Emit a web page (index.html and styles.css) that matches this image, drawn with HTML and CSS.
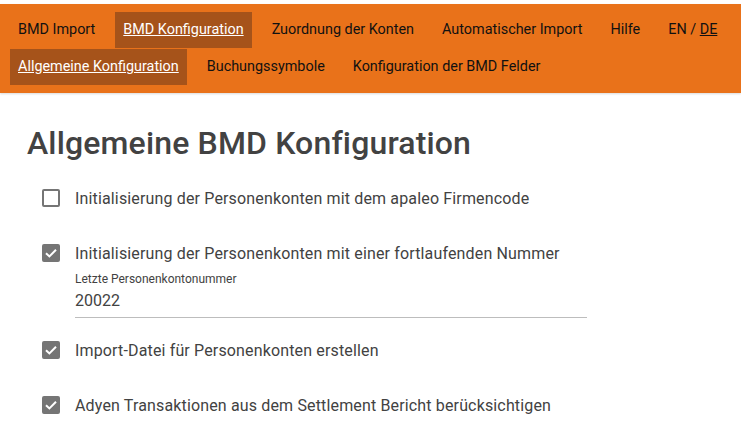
FILE: index.html
```html
<!DOCTYPE html>
<html lang="de">
<head>
  <meta charset="UTF-8">
  <meta name="viewport" content="width=device-width, initial-scale=1.0">
  <title>BMD Konfiguration</title>
  <link rel="stylesheet" href="styles.css">
</head>
<body>

  <header class="topbar">
    <nav class="nav-row">
      <a class="nav-item" href="#">BMD Import</a>
      <a class="nav-item active" href="#">BMD Konfiguration</a>
      <a class="nav-item" href="#">Zuordnung der Konten</a>
      <a class="nav-item" href="#">Automatischer Import</a>
      <a class="nav-item" href="#">Hilfe</a>
      <span class="nav-item lang">EN / <u>DE</u></span>
    </nav>
    <nav class="nav-row">
      <a class="nav-item active" href="#">Allgemeine Konfiguration</a>
      <a class="nav-item" href="#">Buchungssymbole</a>
      <a class="nav-item" href="#">Konfiguration der BMD Felder</a>
    </nav>
  </header>

  <main class="content">
    <h1>Allgemeine BMD Konfiguration</h1>

    <label class="option option-first">
      <span class="checkbox"></span>
      <span class="option-text">Initialisierung der Personenkonten mit dem apaleo Firmencode</span>
    </label>

    <label class="option">
      <span class="checkbox checked">
        <svg viewBox="0 0 18 18" width="18" height="18"><polyline points="4,9.2 7.4,12.4 14,5.8" fill="none" stroke="#fff" stroke-width="2"/></svg>
      </span>
      <span class="option-text">Initialisierung der Personenkonten mit einer fortlaufenden Nummer</span>
    </label>

    <div class="field">
      <div class="field-label">Letzte Personenkontonummer</div>
      <div class="field-input">20022</div>
    </div>

    <label class="option option-after-field">
      <span class="checkbox checked">
        <svg viewBox="0 0 18 18" width="18" height="18"><polyline points="4,9.2 7.4,12.4 14,5.8" fill="none" stroke="#fff" stroke-width="2"/></svg>
      </span>
      <span class="option-text">Import-Datei für Personenkonten erstellen</span>
    </label>

    <label class="option">
      <span class="checkbox checked">
        <svg viewBox="0 0 18 18" width="18" height="18"><polyline points="4,9.2 7.4,12.4 14,5.8" fill="none" stroke="#fff" stroke-width="2"/></svg>
      </span>
      <span class="option-text">Adyen Transaktionen aus dem Settlement Bericht berücksichtigen</span>
    </label>
  </main>

</body>
</html>
```

FILE: styles.css
```css
body {
  margin: 0;
  padding-top: 4px;
  background-color: #FFF;
  font-family: Roboto, "Liberation Sans", sans-serif;
  color: #424242;
}

.topbar {
  background-color: #E9721A;
  padding: 8px 10px;
  box-shadow: 0 1px 2px rgba(0, 0, 0, 0.15);
}

.nav-row {
  display: flex;
  gap: 12px;
}

.nav-row + .nav-row {
  margin-top: 1px;
}

.nav-item {
  display: block;
  height: 36px;
  line-height: 36px;
  padding: 0 8px;
  font-size: 14.4px;
  color: #111;
  text-decoration: none;
  white-space: nowrap;
  flex-shrink: 0;
}

.nav-item.active {
  background-color: #A6531A;
  color: #FFF;
  text-decoration: underline;
}

.content {
  padding: 0 27px;
}

h1 {
  font-size: 32px;
  font-weight: 500;
  line-height: 38px;
  margin: 31px 0 0;
  color: #424242;
  letter-spacing: 0.15px;
}

.option {
  display: flex;
  align-items: center;
  gap: 15px;
  height: 24px;
  margin: 31px 0 0 15px;
  font-size: 16px;
  letter-spacing: 0.15px;
  cursor: pointer;
}

.option-first {
  margin-top: 24px;
}

.option-after-field {
  margin-top: 20px;
}

.checkbox {
  box-sizing: border-box;
  width: 18px;
  height: 18px;
  border: 2px solid #757575;
  border-radius: 2px;
  display: flex;
  align-items: center;
  justify-content: center;
  flex-shrink: 0;
}

.checkbox.checked {
  background-color: #757575;
}

.checkbox svg {
  display: block;
  margin: -2px;
}

.field {
  margin: 7px 0 0 48px;
  width: 512px;
  border-bottom: 1px solid #BDBDBD;
}

.field-label {
  font-size: 12px;
  line-height: 14px;
  color: #424242;
}

.field-input {
  font-size: 16px;
  line-height: 20px;
  margin-top: 5px;
  padding-bottom: 6px;
}
```
